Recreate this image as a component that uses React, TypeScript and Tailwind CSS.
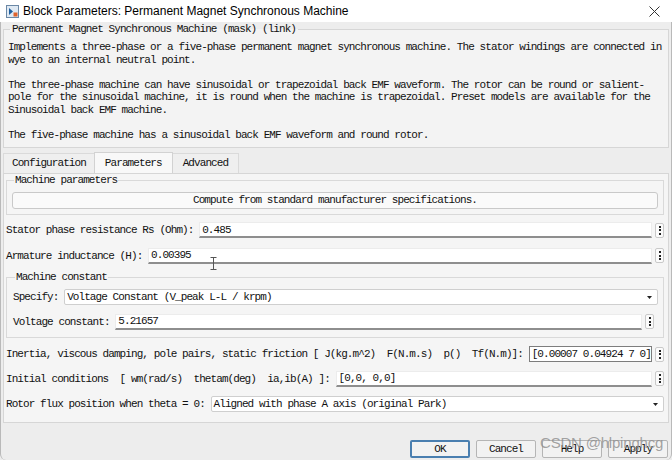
import React from 'react';

const mono = "font-['Liberation_Mono',monospace] text-[11px] tracking-[-0.92px] text-[#111]";

function BlockIcon() {
  return (
    <svg width="13" height="13" viewBox="0 0 13 13">
      <rect x="0.5" y="0.5" width="12" height="12" fill="#dfe9f3" stroke="#6b88a6" />
      <path d="M3 3 L7 6.5 L3 10 Z" fill="#1f5f9e" />
      <rect x="7.5" y="7.5" width="4" height="4" fill="#e0622b" />
    </svg>
  );
}

function Dots() {
  return (
    <div className="w-[9px] h-[15px] ml-[3px] shrink-0 border border-[#c9c9c9] rounded-[2px] bg-[#fbfbfb] flex flex-col items-center justify-center gap-[1.5px]">
      <span className="w-[2px] h-[2px] bg-[#222]" />
      <span className="w-[2px] h-[2px] bg-[#222]" />
      <span className="w-[2px] h-[2px] bg-[#222]" />
    </div>
  );
}

function Field({ value, boxed }: { value: string; boxed?: boolean }) {
  return (
    <div
      className={`flex-1 min-w-0 overflow-hidden whitespace-nowrap h-[16px] bg-white flex items-center px-[2px] ${
        boxed ? 'border border-[#7d7d7d]' : 'border border-[#ececec] border-b-[#8e8e8e] border-b-2'
      } ${mono}`}
    >
      {value}
    </div>
  );
}

function Select({ value }: { value: string }) {
  return (
    <div className={`flex-1 min-w-0 h-[16px] bg-white border border-[#cfcfcf] rounded-[2px] flex items-center justify-between pl-[2px] pr-[5px] whitespace-nowrap ${mono}`}>
      <span>{value}</span>
      <svg width="5" height="3" viewBox="0 0 5 3">
        <path d="M0 0 L5 0 L2.5 3 Z" fill="#222" />
      </svg>
    </div>
  );
}

function Label({ text }: { text: string }) {
  return <span className={`shrink-0 whitespace-pre ${mono}`}>{text}</span>;
}

function Btn({ label, focused, muted }: { label: string; focused?: boolean; muted?: boolean }) {
  return (
    <div
      className={`w-[60px] h-[18px] flex items-center justify-center rounded-[2px] ${
        focused ? 'border-2 border-[#4a7fb0] bg-[#f2f2f2]' : 'border border-[#b5b5b5] bg-[#f2f2f2]'
      } ${mono} ${muted ? 'text-[#9a9a9a]' : ''}`}
    >
      {label}
    </div>
  );
}

export default function App() {
  return (
    <div className="w-[672px] h-[460px] bg-[#ededed] flex flex-col overflow-hidden relative">
      {/* title bar */}
      <div className="h-[22px] bg-white flex items-center pl-[6px] pr-[12px] shrink-0">
        <BlockIcon />
        <span className="ml-[4px] font-['Liberation_Sans',sans-serif] text-[12px] text-black">
          Block Parameters: Permanent Magnet Synchronous Machine
        </span>
        <svg className="ml-auto" width="11" height="11" viewBox="0 0 11 11">
          <path d="M0.5 0.5 L10.5 10.5 M10.5 0.5 L0.5 10.5" stroke="#333" strokeWidth="1" />
        </svg>
      </div>

      <div className="flex-1 flex flex-col border-x border-[#b9b9b9] rounded-b-[6px] px-[2px]">
        {/* description */}
        <fieldset className="mt-[1px] border border-[#d6d6d6] bg-[#f3f3f3] px-[4px] pb-[6px]">
          <legend className={`ml-[2px] px-[2px] leading-[12px] ${mono}`}>
            Permanent Magnet Synchronous Machine (mask) (link)
          </legend>
          <div className={`mt-[6px] leading-[12.5px] whitespace-pre ${mono}`}>
            {`Implements a three-phase or a five-phase permanent magnet synchronous machine. The stator windings are connected in
wye to an internal neutral point.

The three-phase machine can have sinusoidal or trapezoidal back EMF waveform. The rotor can be round or salient-
pole for the sinusoidal machine, it is round when the machine is trapezoidal. Preset models are available for the
Sinusoidal back EMF machine.

The five-phase machine has a sinusoidal back EMF waveform and round rotor.`}
          </div>
        </fieldset>

        {/* tabs */}
        <div className="mt-[4px] flex items-end h-[21px]">
          <div className={`h-[20px] px-[8px] flex items-center border-t border-l border-[#dadada] bg-[#efefef] ${mono}`}>Configuration</div>
          <div className={`h-[21px] px-[10px] flex items-center border-t border-x border-[#d2d2d2] bg-[#f8f8f8] ${mono}`}>Parameters</div>
          <div className={`h-[20px] px-[10px] flex items-center border-t border-r border-[#dadada] bg-[#efefef] ${mono}`}>Advanced</div>
        </div>

        {/* tab panel */}
        <div className="h-[250px] border border-[#d6d6d6] bg-[#f5f5f5] flex flex-col pl-[2px] pr-[4px] relative">
          <fieldset className="border border-[#d9d9d9] px-[5px] pb-[5px]">
            <legend className={`ml-[2px] px-[1px] leading-[12px] ${mono}`}>Machine parameters</legend>
            <div className={`mt-[6px] h-[17px] border border-[#c9c9c9] rounded-[3px] bg-[#fafafa] flex items-center justify-center ${mono}`}>
              Compute from standard manufacturer specifications.
            </div>
          </fieldset>

          <div className="mt-[7px] flex items-center">
            <Label text="Stator phase resistance Rs (Ohm): " />
            <Field value="0.485" />
            <Dots />
          </div>

          <div className="mt-[9px] flex items-center">
            <Label text="Armature inductance (H): " />
            <Field value="0.00395" />
            <Dots />
          </div>

          <fieldset className="mt-[7px] border border-[#d9d9d9] pl-[6px] pr-[5px] pb-[7px]">
            <legend className={`ml-[2px] px-[1px] leading-[12px] ${mono}`}>Machine constant</legend>
            <div className="mt-[6px] flex items-center">
              <Label text="Specify: " />
              <Select value="Voltage Constant (V_peak L-L / krpm)" />
            </div>
            <div className="mt-[8px] flex items-center">
              <Label text="Voltage constant: " />
              <Field value="5.21657" />
              <Dots />
              <span className="w-[4px]" />
            </div>
          </fieldset>

          <div className="mt-[8px] flex items-center">
            <Label text="Inertia, viscous damping, pole pairs, static friction [ J(kg.m^2)  F(N.m.s)  p()  Tf(N.m)]: " />
            <Field value="[0.00007 0.04924 7 0]" boxed />
            <Dots />
          </div>

          <div className="mt-[8px] flex items-center">
            <Label text="Initial conditions  [ wm(rad/s)  thetam(deg)  ia,ib(A) ]: " />
            <Field value="[0,0, 0,0]" />
            <Dots />
          </div>

          <div className="mt-[9px] flex items-center">
            <Label text="Rotor flux position when theta = 0: " />
            <Select value="Aligned with phase A axis (original Park)" />
          </div>

          {/* mouse cursor */}
          <svg className="absolute left-[206px] top-[83px]" width="7" height="13" viewBox="0 0 7 13">
            <path d="M0.5 0.5 H6.5 M3.5 0.5 V12.5 M0.5 12.5 H6.5" stroke="#555" strokeWidth="1" fill="none" />
          </svg>
        </div>

        {/* buttons */}
        <div className="mt-[17px] flex justify-end gap-[6px] pr-[1px]">
          <Btn label="OK" focused />
          <Btn label="Cancel" />
          <Btn label="Help" />
          <Btn label="Apply" muted />
        </div>
      </div>

      {/* watermark */}
      <div className="absolute left-[540px] top-[432px] font-['Liberation_Sans',sans-serif] text-[15px] text-[#8c8c8c]/80 tracking-[-0.2px]">
        CSDN @hlpinghcg
      </div>
    </div>
  );
}
